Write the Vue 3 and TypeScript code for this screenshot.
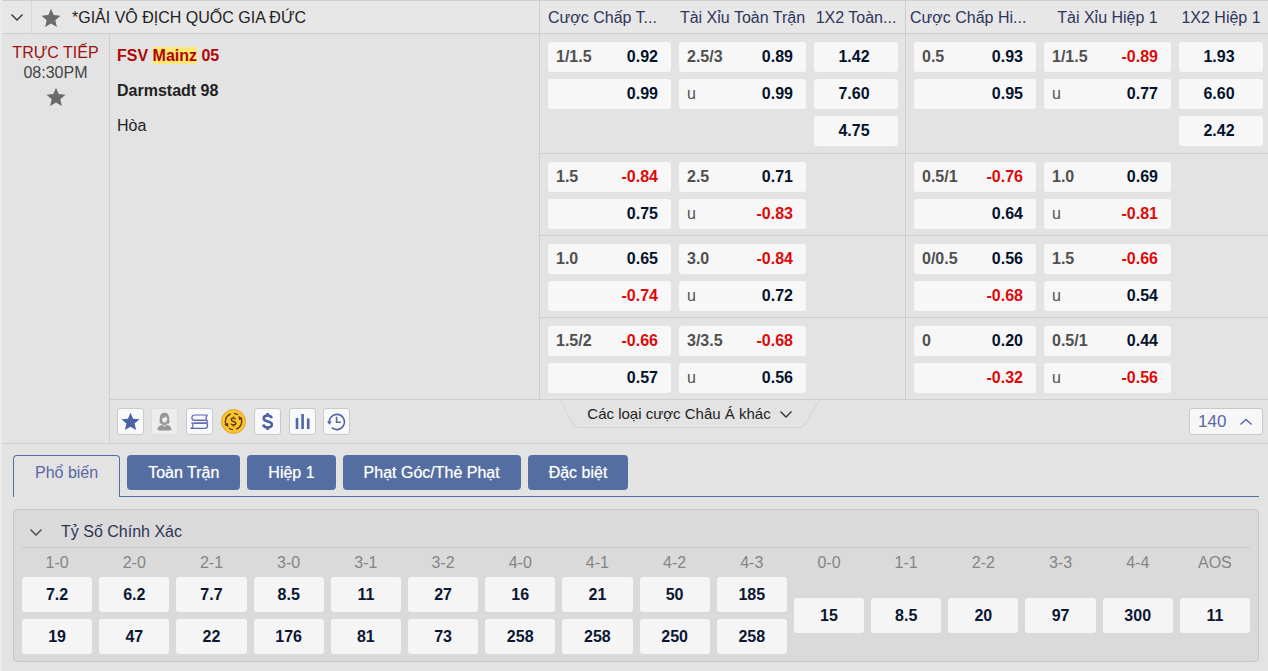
<script setup lang="ts">
import { ref } from 'vue'

interface Odd {
  line?: string
  price: string
}
interface Market {
  kind: 'hdp' | 'ou' | 'win'
  odds: Odd[]
}
interface Heading {
  label: string
  full: string
}

const odd = (text: string): Odd => {
  const [line, price] = text.split('|')
  return { line, price }
}
const market = (kind: Market['kind'], ...items: string[]): Market => ({ kind, odds: items.map(odd) })

const headings: Heading[][] = [
  [
    { label: 'Cược Chấp T...', full: 'Cược Chấp Toàn Trận' },
    { label: 'Tài Xỉu Toàn Trận', full: 'Tài Xỉu Toàn Trận' },
    { label: '1X2 Toàn...', full: '1X2 Toàn Trận' },
  ],
  [
    { label: 'Cược Chấp Hi...', full: 'Cược Chấp Hiệp 1' },
    { label: 'Tài Xỉu Hiệp 1', full: 'Tài Xỉu Hiệp 1' },
    { label: '1X2 Hiệp 1', full: '1X2 Hiệp 1' },
  ],
]

const rows: Market[][][] = [
  [
    [market('hdp', '1/1.5|0.92', '|0.99'), market('ou', '2.5/3|0.89', 'u|0.99'), market('win', '|1.42', '|7.60', '|4.75')],
    [market('hdp', '0.5|0.93', '|0.95'), market('ou', '1/1.5|-0.89', 'u|0.77'), market('win', '|1.93', '|6.60', '|2.42')],
  ],
  [
    [market('hdp', '1.5|-0.84', '|0.75'), market('ou', '2.5|0.71', 'u|-0.83')],
    [market('hdp', '0.5/1|-0.76', '|0.64'), market('ou', '1.0|0.69', 'u|-0.81')],
  ],
  [
    [market('hdp', '1.0|0.65', '|-0.74'), market('ou', '3.0|-0.84', 'u|0.72')],
    [market('hdp', '0/0.5|0.56', '|-0.68'), market('ou', '1.5|-0.66', 'u|0.54')],
  ],
  [
    [market('hdp', '1.5/2|-0.66', '|0.57'), market('ou', '3/3.5|-0.68', 'u|0.56')],
    [market('hdp', '0|0.20', '|-0.32'), market('ou', '0.5/1|0.44', 'u|-0.56')],
  ],
]

const tabs: string[] = ['Phổ biến', 'Toàn Trận', 'Hiệp 1', 'Phạt Góc/Thẻ Phạt', 'Đặc biệt']
const activeTab = ref(0)

const scores: string[] = ['1-0', '2-0', '2-1', '3-0', '3-1', '3-2', '4-0', '4-1', '4-2', '4-3', '0-0', '1-1', '2-2', '3-3', '4-4', 'AOS']
const home: string[] = ['7.2', '6.2', '7.7', '8.5', '11', '27', '16', '21', '50', '185']
const draw: string[] = ['15', '8.5', '20', '97', '300', '11']
const away: string[] = ['19', '47', '22', '176', '81', '73', '258', '258', '250', '258']
</script>

<template>
  <main class="page">
    <section class="match">
      <header class="head">
        <button class="plain toggle" aria-label="Thu gọn">
          <svg width="14" height="14" viewBox="0 0 14 14"><path d="M1.500 4.500L7 10l5.500-5.500" fill="none" stroke="#333" stroke-width="1.400" /></svg>
        </button>
        <div class="league">
          <button class="plain" aria-label="Yêu thích giải">
            <svg width="20" height="20" viewBox="0 0 20 20"><path d="M10 .8l2.700 6.300 6.800.6-5.200 4.500 1.600 6.700L10 15.400l-5.900 3.500 1.600-6.700L.5 7.700l6.800-.6z" fill="#6b6b6b" /></svg>
          </button>
          <span>*GIẢI VÔ ĐỊCH QUỐC GIA ĐỨC</span>
        </div>
        <div v-for="(group, g) in headings" :key="g" class="titles" :class="{ half: g === 1 }">
          <span v-for="h in group" :key="h.label" class="title" :title="h.full">{{ h.label }}</span>
        </div>
      </header>

      <div class="body">
        <aside class="time">
          <span class="live">TRỰC TIẾP</span>
          <span class="clock">08:30PM</span>
          <button class="plain star" aria-label="Yêu thích trận">
            <svg width="20" height="20" viewBox="0 0 20 20"><path d="M10 .8l2.700 6.300 6.800.6-5.200 4.500 1.600 6.700L10 15.400l-5.900 3.500 1.600-6.700L.5 7.700l6.800-.6z" fill="#6b6b6b" /></svg>
          </button>
        </aside>
        <div class="teams">
          <span class="team fav">FSV <mark>Mainz</mark> 05</span>
          <span class="team">Darmstadt 98</span>
          <span>Hòa</span>
        </div>
        <div class="markets">
          <div v-for="(row, r) in rows" :key="r" class="row">
            <div v-for="(group, g) in row" :key="g" class="group" :class="{ half: g === 1 }">
              <div v-for="m in group" :key="m.kind" class="col">
                <button v-for="(o, i) in m.odds" :key="i" class="odd" :class="m.kind">
                  <span v-if="m.kind !== 'win'" class="line" :class="{ under: o.line === 'u' }">{{ o.line }}</span>
                  <span class="price" :class="{ neg: o.price.startsWith('-') }">{{ o.price }}</span>
                </button>
              </div>
            </div>
          </div>
        </div>

        <div class="bar">
          <div class="tools">
            <button class="tool" aria-label="Yêu thích">
              <svg width="19" height="19" viewBox="0 0 20 20"><path d="M10 .8l2.700 6.300 6.800.6-5.200 4.500 1.600 6.700L10 15.400l-5.900 3.500 1.600-6.700L.5 7.700l6.800-.6z" fill="#4a63a3" /></svg>
            </button>
            <button class="tool faded" aria-label="Người chia bài">
              <svg width="19" height="19" viewBox="0 0 19 19"><path d="M5 11.500C4.200 10 4.800 8.500 4.800 6 4.800 2.700 6.800.8 9.500.8s4.700 1.900 4.700 5.200c0 2.500.6 4-.2 5.500l-2.300.3v1.200c2.600.6 4.600 1.300 4.800 4.900-2.300.9-11.700.9-14 0 .2-3.600 2.200-4.300 4.800-4.900v-1.200z" fill="#969696" /><path d="M7 6.500c1.500-.3 3-1 3.800-2.200.3 1 .9 1.600 1.500 2-.1 2.800-1.300 4.400-2.800 4.400S7 9 7 6.500z" fill="#eee" /><path d="M8.300 12.800l1.200 1.700 1.200-1.700" fill="none" stroke="#eee" /></svg>
            </button>
            <button class="tool" aria-label="Kèo xếp lớp">
              <svg width="19" height="19" viewBox="0 0 19 19" fill="none" stroke="#5a68ab" stroke-width="1.200"><path d="M17.500 3H4.500C1 3 1 8.300 4.500 8.300H15.500M17.500 3c-1.800 1.700-2 3.600-.5 5.300" /><path d="M4.500 8.300h11c2.900 0 2.900 2.800.5 2.800H4.200" /><path d="M1.500 16.300h13.500c3.500 0 3.500-5.200 0-5.200H2c1.500 1.700 1.500 3.500-.5 5.200z" /></svg>
            </button>
            <button class="tool coin" aria-label="Cash out">
              <svg width="25" height="25" viewBox="0 0 25 25"><circle cx="12.500" cy="12.500" r="12" fill="#fcc42c" stroke="#dca52a" /><g fill="none" stroke="#5a3710" stroke-width="1.400"><path d="M9.800 4.800a8.200 8.200 0 0 0-4.400 11.900M15.200 20.200a8.200 8.200 0 0 0 4.400-11.900M8 19.300a8.200 8.200 0 0 0 4 1.400M17 5.700a8.200 8.200 0 0 0-4-1.400" stroke-width="1.300" /><path d="M14.700 10.300c-.4-.8-1.200-1.200-2.200-1.200-1.300 0-2.200.6-2.200 1.700 0 2.300 4.500 1.200 4.500 3.500 0 1.100-1 1.700-2.300 1.700-1.100 0-2-.4-2.400-1.200M12.500 7.600v1.700M12.500 15.900v1.700" /></g><path d="M3.400 15.200l3.700-1.200.2 4.200zM21.600 9.800l-3.700 1.200-.2-4.200z" fill="#5a3710" /></svg>
            </button>
            <button class="tool" aria-label="Đặt cược">
              <svg width="19" height="19" viewBox="0 0 19 19"><path d="M13.600 6.300c-.3-1.800-1.700-2.700-4-2.700-2.400 0-3.900 1-3.900 2.800 0 4 8.200 2.200 8.200 6.100 0 1.900-1.700 2.900-4.200 2.900-2.500 0-4.100-1-4.400-2.900M9.600 1v3M9.600 15v3" fill="none" stroke="#4a5fa0" stroke-width="2.500" /></svg>
            </button>
            <button class="tool" aria-label="Thống kê">
              <svg width="19" height="19" viewBox="0 0 19 19"><path d="M4 6v11M9.600 2v15M15.200 6.500v10.500" fill="none" stroke="#5366a5" stroke-width="2.600" /></svg>
            </button>
            <button class="tool" aria-label="Lịch sử">
              <svg width="19" height="19" viewBox="0 0 19 19" fill="none" stroke="#5366a5" stroke-width="1.600"><path d="M2.300 11.300a7.600 7.600 0 1 1 2.500 4.400M9.600 4.800v5.400h4.200" /><path d="M.2 9.300h4.600l-2.400 3.500z" fill="#5366a5" stroke="none" /></svg>
            </button>
          </div>
          <button class="more">
            <svg class="outline" width="260" height="28" viewBox="0 0 260 28"><path d="M.5 0l11 22q3 5.500 8 5.500h220q4 0 7-5.500L259.500 0" fill="none" stroke="#d3d3d3" /></svg>
            <span>Các loại cược Châu Á khác</span>
            <svg width="14" height="14" viewBox="0 0 14 14"><path d="M1.500 4.500L7 10l5.500-5.500" fill="none" stroke="#333" stroke-width="1.400" /></svg>
          </button>
          <button class="count">
            <span>140</span>
            <svg width="14" height="14" viewBox="0 0 14 14"><path d="M1.500 9.500L7 4.500l5.500 5" fill="none" stroke="#5668a0" stroke-width="1.400" /></svg>
          </button>
        </div>
      </div>
    </section>

    <nav class="tabs">
      <button v-for="(t, i) in tabs" :key="t" class="tab" :class="{ active: activeTab === i }" @click="activeTab = i">{{ t }}</button>
      <span class="rule"></span>
    </nav>

    <section class="panel">
      <button class="plain caption">
        <svg width="14" height="14" viewBox="0 0 14 14"><path d="M1.500 4.500L7 10l5.500-5.500" fill="none" stroke="#444" stroke-width="1.400" /></svg>
        <span>Tỷ Số Chính Xác</span>
      </button>
      <table class="scores">
        <thead>
          <tr><th v-for="s in scores" :key="s" scope="col">{{ s }}</th></tr>
        </thead>
        <tbody>
          <tr>
            <td v-for="(v, i) in home" :key="i"><button class="score">{{ v }}</button></td>
            <td v-for="(v, i) in draw" :key="'d' + i" rowspan="2"><button class="score">{{ v }}</button></td>
          </tr>
          <tr>
            <td v-for="(v, i) in away" :key="i"><button class="score">{{ v }}</button></td>
          </tr>
        </tbody>
      </table>
    </section>
  </main>
</template>

<style>
body {
  background: #e3e3e3;
}
</style>

<style scoped>
.page {
  --line: #cecece;
  --blue: #546ea2;
  border-left: 2px solid #ebebeb;
  font-family: "Liberation Sans", Arial, sans-serif;
  font-size: 16px;
  line-height: 20px;
  color: #222;
  padding-bottom: 9px;
}
button {
  font: inherit;
  color: inherit;
  border: 0;
  margin: 0;
  padding: 0;
  cursor: pointer;
}
svg {
  display: block;
  flex: none;
}
.plain {
  background: none;
}
.head {
  display: grid;
  grid-template-columns: 30px minmax(0, 1fr) 366px 362px;
  height: 34px;
  box-sizing: border-box;
  border-top: 1px solid var(--line);
  border-bottom: 1px solid var(--line);
  background: #e7e7e7;
}
.toggle {
  display: flex;
  align-items: center;
  justify-content: center;
  border-right: 1px solid #d8d8d8;
}
.league {
  display: flex;
  align-items: center;
  gap: 11px;
  padding: 2px 0 0 9px;
  border-right: 1px solid var(--line);
}
.titles {
  display: grid;
  grid-template-columns: 123px 127px 84px;
  column-gap: 8px;
  align-items: center;
  padding: 2px 0 0 8px;
  color: #2e355c;
  border-right: 1px solid var(--line);
}
.titles.half {
  grid-template-columns: 126px 127px 84px;
  padding-left: 4px;
  border-right: 0;
}
.title {
  white-space: nowrap;
  text-align: center;
}
.title:first-child {
  text-align: left;
}
.body {
  display: grid;
  grid-template-columns: 108px minmax(0, 1fr) 728px;
}
.time {
  grid-row: span 2;
  display: flex;
  flex-direction: column;
  align-items: center;
  padding-top: 9px;
  border-right: 1px solid var(--line);
  border-bottom: 1px solid var(--line);
}
.live {
  color: #9b1212;
}
.clock {
  color: #444;
}
.star {
  margin-top: 4px;
}
.teams {
  display: flex;
  flex-direction: column;
  gap: 15px;
  padding: 12px 7px;
  border-right: 1px solid var(--line);
}
.team {
  font-weight: 700;
}
.fav {
  color: #b00505;
}
mark {
  color: inherit;
  background: #ffe873;
}
.row {
  display: grid;
  grid-template-columns: 366px 362px;
  border-bottom: 1px solid var(--line);
}
.row:last-child {
  border-bottom: 0;
}
.group {
  display: grid;
  grid-template-columns: 123px 127px 84px;
  column-gap: 8px;
  padding: 8px 0 6px 8px;
  border-right: 1px solid var(--line);
}
.group.half {
  grid-template-columns: 122px 127px 84px;
  border-right: 0;
}
.row:first-child .group {
  padding-bottom: 7px;
}
.col {
  display: flex;
  flex-direction: column;
  gap: 7px;
}
.odd {
  display: flex;
  align-items: center;
  justify-content: space-between;
  height: 30px;
  padding: 0 13px 0 8px;
  border-radius: 3px;
  background: #f7f7f7;
  color: #04132c;
  font-weight: 700;
}
.odd.win {
  justify-content: center;
  padding: 0 4px 0 0;
}
.line {
  color: #505050;
}
.under {
  font-weight: 400;
}
.neg {
  color: #dc0a0a;
}
.bar {
  grid-column: 2 / -1;
  display: grid;
  grid-template-columns: minmax(0, 1fr) 366px 362px;
  align-items: start;
  height: 45px;
  box-sizing: border-box;
  border-top: 1px solid var(--line);
  border-bottom: 1px solid var(--line);
}
.tools {
  display: flex;
  justify-content: space-between;
  width: 233px;
  margin: 8px 0 0 7px;
}
.tool {
  display: flex;
  align-items: center;
  justify-content: center;
  width: 27px;
  height: 27px;
  box-sizing: border-box;
  border: 1px solid #c9c9c9;
  border-radius: 3px;
  background: #f8f9fa;
}
.tool.faded {
  border-color: #dcdcdc;
  background: #ededed;
}
.tool.coin {
  border: 0;
  background: none;
}
.more {
  position: relative;
  display: flex;
  align-items: center;
  justify-content: center;
  gap: 8px;
  width: 260px;
  height: 28px;
  margin-left: 20px;
  background: none;
  font-size: 15px;
}
.outline {
  position: absolute;
  inset: 0;
}
.count {
  display: flex;
  align-items: center;
  justify-content: space-between;
  justify-self: end;
  width: 74px;
  height: 27px;
  margin: 8px 5px 0 0;
  padding: 0 9px 0 8px;
  border: 1px solid #c8c8c8;
  border-radius: 3px;
  background: #f7f7f7;
  color: #5668a0;
  font-size: 17px;
}
.tabs {
  display: flex;
  align-items: flex-start;
  gap: 7px;
  position: relative;
  margin: 11px 9px 0 11px;
  height: 42px;
}
.tab {
  height: 35px;
  padding: 0 21px;
  border-radius: 4px;
  background: var(--blue);
  color: #fff;
  text-shadow: 0 0 1px rgba(255, 255, 255, 0.6);
}
.tab.active {
  position: relative;
  z-index: 1;
  height: 42px;
  padding: 0 21px 7px;
  border: 1px solid var(--blue);
  border-bottom: 0;
  border-radius: 4px 4px 0 0;
  background: #e3e3e3;
  color: #5a67a3;
  text-shadow: none;
}
.rule {
  position: absolute;
  left: 0;
  right: 0;
  bottom: 0;
  height: 1px;
  background: var(--blue);
}
.panel {
  margin: 12px 9px 0 11px;
  border: 1px solid #c6c6c6;
  border-radius: 4px;
  background: #dadada;
  padding: 0 1px;
}
.caption {
  display: flex;
  align-items: center;
  gap: 18px;
  width: calc(100% - 14px);
  height: 38px;
  margin: 0 7px;
  padding: 7px 7px 0;
  border-bottom: 1px solid #c8c8c8;
  color: #2f3455;
}
.scores {
  width: 100%;
  table-layout: fixed;
  border-collapse: separate;
  border-spacing: 7px;
}
th {
  padding: 0;
  height: 15px;
  line-height: 15px;
  font-weight: 400;
  color: #858585;
}
td {
  padding: 0;
  vertical-align: middle;
}
.score {
  display: block;
  width: 100%;
  height: 35px;
  border-radius: 3px;
  background: #f5f5f5;
  color: #0b1733;
  font-weight: 700;
}
</style>
